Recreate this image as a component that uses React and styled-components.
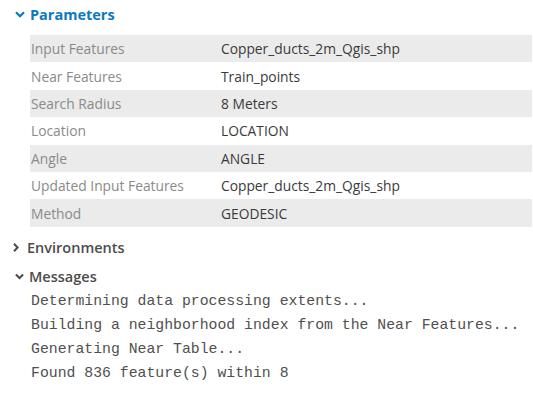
import React from 'react';
import styled, { createGlobalStyle } from 'styled-components';

const GlobalStyle = createGlobalStyle`
  body {
    margin: 0;
    background: #ffffff;
    font-family: "Open Sans", "Noto Sans", sans-serif;
  }
`

const Page = styled.div`
  width: 533px;
  height: 416px;
  padding-top: 3px;
  box-sizing: border-box;
`

const SectionHeader = styled.div`
  display: flex;
  align-items: center;
  height: 23px;
  padding-left: ${({ open }) => (open ? '15px' : '13px')};
  gap: ${({ open }) => (open ? '5px' : '8px')};
  font-size: 14.5px;
  font-weight: ${({ active }) => (active ? 700 : 600)};
  color: ${({ active }) => (active ? '#0a79c4' : '#4c4c4c')};
`

const Chevron = styled.svg`
  flex: none;
  display: block;
`

const ParamTable = styled.div`
  margin: 9px 1px 0 30px;
  display: flex;
  flex-direction: column;
`

const ParamRow = styled.div`
  display: grid;
  grid-template-columns: 191px 1fr;
  align-items: center;
  height: 27.4px;
  font-size: 13.8px;
  background: ${({ shaded }) => (shaded ? '#ebebeb' : 'transparent')};
`

const ParamLabel = styled.span`
  padding-left: 1px;
  color: #8a8a8a;
`

const ParamValue = styled.span`
  color: #3a3a3a;
`

const Spacer = styled.div`
  height: ${({ h }) => h}px;
`

const MessageList = styled.div`
  padding-left: 31px;
  margin-top: 1px;
  font-family: "Liberation Mono", "DejaVu Sans Mono", monospace;
  font-size: 14.8px;
  color: #505050;
`

const MessageLine = styled.div`
  height: 24px;
  line-height: 24px;
  white-space: pre;
`

const ChevronDown = ({ color, w = 10 }) => (
  <Chevron width={w} height="7" viewBox="0 0 10 7">
    <path d="M1 1.2 L5 5.2 L9 1.2" fill="none" stroke={color} strokeWidth="2.2" />
  </Chevron>
)

const ChevronRight = ({ color }) => (
  <Chevron width="6" height="9" viewBox="0 0 6 9">
    <path d="M1 0.8 L4.6 4.5 L1 8.2" fill="none" stroke={color} strokeWidth="2" />
  </Chevron>
)

const params = [
  ['Input Features', 'Copper_ducts_2m_Qgis_shp'],
  ['Near Features', 'Train_points'],
  ['Search Radius', '8 Meters'],
  ['Location', 'LOCATION'],
  ['Angle', 'ANGLE'],
  ['Updated Input Features', 'Copper_ducts_2m_Qgis_shp'],
  ['Method', 'GEODESIC'],
]

const messages = [
  'Determining data processing extents...',
  'Building a neighborhood index from the Near Features...',
  'Generating Near Table...',
  'Found 836 feature(s) within 8',
]

const App = () => {
  return (
    <>
      <GlobalStyle />
      <Page>
        <SectionHeader open active>
          <ChevronDown color="#0a79c4" />
          Parameters
        </SectionHeader>
        <ParamTable>
          {params.map(([label, value], i) => (
            <ParamRow key={label} shaded={i % 2 === 0}>
              <ParamLabel>{label}</ParamLabel>
              <ParamValue>{value}</ParamValue>
            </ParamRow>
          ))}
        </ParamTable>
        <Spacer h={9} />
        <SectionHeader>
          <ChevronRight color="#4c4c4c" />
          Environments
        </SectionHeader>
        <Spacer h={6} />
        <SectionHeader open>
          <ChevronDown color="#4c4c4c" w={9} />
          Messages
        </SectionHeader>
        <MessageList>
          {messages.map((m) => (
            <MessageLine key={m}>{m}</MessageLine>
          ))}
        </MessageList>
      </Page>
    </>
  );
};

export default App;
